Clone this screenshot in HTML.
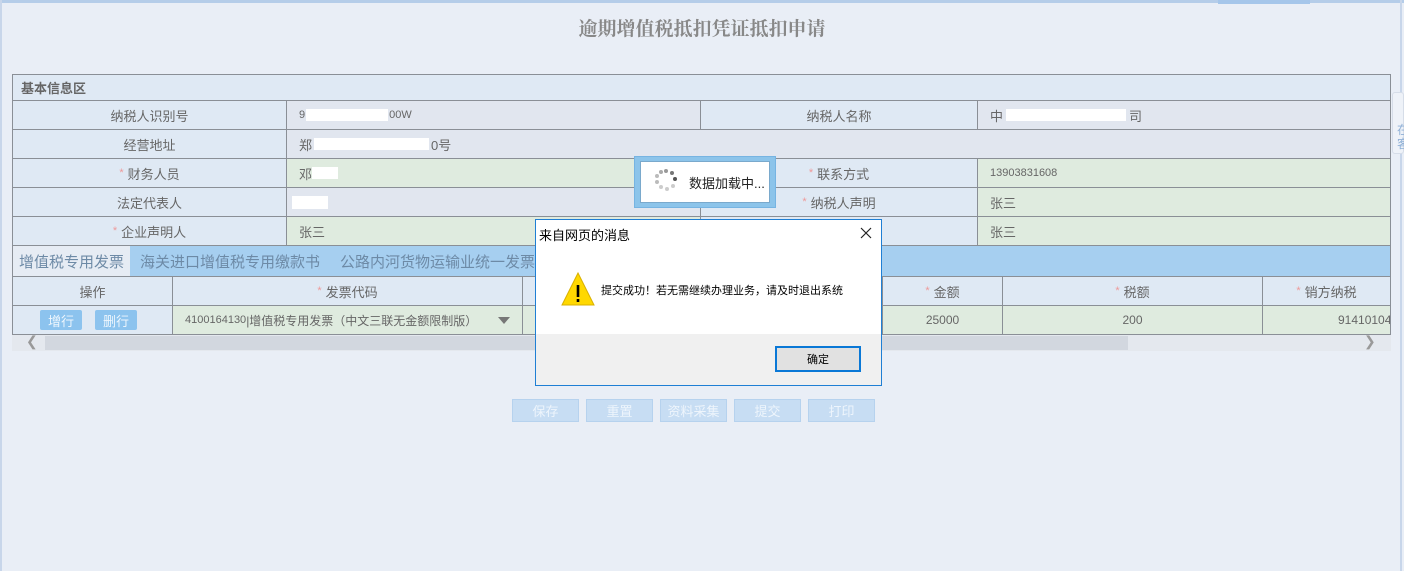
<!DOCTYPE html>
<html><head><meta charset="utf-8"><style>
*{margin:0;padding:0;box-sizing:border-box}
body{width:1404px;height:571px;background:#e9eef6;font-family:"Liberation Sans","Noto Sans CJK SC",sans-serif;position:relative;overflow:hidden;color:#666;font-size:13px}
.a{position:absolute}
.c{position:absolute;border-right:1px solid #8a8f96;border-bottom:1px solid #8a8f96;display:flex;align-items:center;font-size:13px;color:#666}
.lb{background:#dfe9f4;justify-content:center}
.gy{background:#e1e6ef;padding-left:12px}
.gr{background:#dfebdf;padding-left:12px}
.st{color:#e99;margin-right:4px;font-size:11px}
.btn{position:absolute;top:399px;height:23px;width:67px;background:#c7ddf3;border:1px solid #b6d2ee;color:#eef5fc;font-size:13px;display:flex;align-items:center;justify-content:center}
.sb{background:#8cc3ee;color:#eef6fd;width:46px;height:20px;display:flex;align-items:center;justify-content:center;border-radius:2px;position:absolute;top:4px}
</style></head><body>
<div class="a" style="left:0;top:0;width:1404px;height:3px;background:#b5cde9"></div>
<div class="a" style="left:1218px;top:0;width:92px;height:4px;background:#a5c6ea"></div>
<div class="a" style="left:0;top:0;width:2px;height:571px;background:#c8d6ea"></div>
<div class="a" style="left:1400px;top:0;width:2px;height:571px;background:#c8d6ea"></div>
<div class="a" style="left:0;top:14px;width:1404px;text-align:center;font-family:'Noto Serif CJK SC',serif;font-weight:bold;font-size:19px;color:#888">逾期增值税抵扣凭证抵扣申请</div>

<div class="a" style="left:12px;top:74px;width:1379px;height:261px;border-left:1px solid #8a8f96;border-top:1px solid #8a8f96"></div>
<div class="c" style="left:13px;top:75px;width:1378px;height:26px;background:#dfe9f4;padding-left:8px;font-weight:bold;color:#666">基本信息区</div>

<div class="c lb" style="left:13px;top:101px;width:274px;height:29px">纳税人识别号</div>
<div class="c gy" style="left:287px;top:101px;width:414px;height:29px;font-size:11px">9<span style="display:inline-block;width:82px;height:12px;background:#fff;margin:0 1px"></span>00W</div>
<div class="c lb" style="left:701px;top:101px;width:277px;height:29px">纳税人名称</div>
<div class="c gy" style="left:978px;top:101px;width:413px;height:29px">中<span style="display:inline-block;width:120px;height:12px;background:#fff;margin:0 3px"></span>司</div>

<div class="c lb" style="left:13px;top:130px;width:274px;height:29px">经营地址</div>
<div class="c gy" style="left:287px;top:130px;width:1104px;height:29px">郑<span style="display:inline-block;width:115px;height:12px;background:#fff;margin:0 2px"></span>0号</div>

<div class="c lb" style="left:13px;top:159px;width:274px;height:29px"><span class="st">*</span>财务人员</div>
<div class="c gr" style="left:287px;top:159px;width:414px;height:29px">邓<span style="display:inline-block;width:26px;height:12px;background:#fff"></span></div>
<div class="c lb" style="left:701px;top:159px;width:277px;height:29px"><span class="st">*</span>联系方式</div>
<div class="c gr" style="left:978px;top:159px;width:413px;height:29px;font-size:11px">13903831608</div>

<div class="c lb" style="left:13px;top:188px;width:274px;height:29px">法定代表人</div>
<div class="c gy" style="left:287px;top:188px;width:414px;height:29px;padding-left:5px"><span style="display:inline-block;width:36px;height:13px;background:#fff"></span></div>
<div class="c lb" style="left:701px;top:188px;width:277px;height:29px"><span class="st">*</span>纳税人声明</div>
<div class="c gr" style="left:978px;top:188px;width:413px;height:29px">张三</div>

<div class="c lb" style="left:13px;top:217px;width:274px;height:29px"><span class="st">*</span>企业声明人</div>
<div class="c gr" style="left:287px;top:217px;width:414px;height:29px">张三</div>
<div class="c lb" style="left:701px;top:217px;width:277px;height:29px"></div>
<div class="c gr" style="left:978px;top:217px;width:413px;height:29px">张三</div>

<div class="c" style="left:13px;top:246px;width:1378px;height:31px;background:#a6cff0;font-size:15px;color:#6d8aa6">
<span style="background:#e6ecf4;height:30px;width:117px;display:flex;align-items:center;justify-content:center">增值税专用发票</span>
<span style="margin-left:10px">海关进口增值税专用缴款书</span><span style="margin-left:20px">公路内河货物运输业统一发票</span></div>

<div class="c lb" style="left:13px;top:277px;width:160px;height:29px">操作</div>
<div class="c lb" style="left:173px;top:277px;width:350px;height:29px"><span class="st">*</span>发票代码</div>
<div class="c lb" style="left:523px;top:277px;width:360px;height:29px"></div>
<div class="c lb" style="left:883px;top:277px;width:120px;height:29px"><span class="st">*</span>金额</div>
<div class="c lb" style="left:1003px;top:277px;width:260px;height:29px"><span class="st">*</span>税额</div>
<div class="c lb" style="left:1263px;top:277px;width:128px;height:29px"><span class="st">*</span>销方纳税</div>

<div class="c lb" style="left:13px;top:306px;width:160px;height:29px"><span class="sb" style="left:27px;width:42px">增行</span><span class="sb" style="left:82px;width:42px">删行</span></div>
<div class="c gr" style="left:173px;top:306px;width:350px;height:29px;font-size:12px"><span style="font-size:11px">4100164130</span>|增值税专用发票（中文三联无金额限制版）<span style="position:absolute;right:12px;top:11px;border:6px solid transparent;border-top:7px solid #777;border-bottom:0"></span></div>
<div class="c gr" style="left:523px;top:306px;width:360px;height:29px"></div>
<div class="c gr" style="left:883px;top:306px;width:120px;height:29px;justify-content:center;padding:0;font-size:12px">25000</div>
<div class="c gr" style="left:1003px;top:306px;width:260px;height:29px;justify-content:center;padding:0;font-size:12px">200</div>
<div class="c gr" style="left:1263px;top:306px;width:128px;height:29px;padding-left:75px;font-size:12px;overflow:hidden;white-space:nowrap">914101047</div>

<div class="a" style="left:12px;top:335px;width:1379px;height:16px;background:#e4e8ee"></div>
<div class="a" style="left:45px;top:336px;width:1083px;height:14px;background:#d2d7df"></div>
<div class="a" style="left:26px;top:333px;color:#999;font-size:14px">&#10094;</div>
<div class="a" style="left:1364px;top:333px;color:#999;font-size:14px">&#10095;</div>

<div class="btn" style="left:512px">保存</div>
<div class="btn" style="left:586px">重置</div>
<div class="btn" style="left:660px">资料采集</div>
<div class="btn" style="left:734px">提交</div>
<div class="btn" style="left:808px">打印</div>

<div class="a" style="left:1392px;top:92px;width:12px;height:62px;background:#eef2f8;border:1px solid #d6dde8;border-radius:3px;color:#8fb0d6;font-size:12px;line-height:14px;padding-left:4px;padding-top:30px">在<br>客</div>

<div class="a" style="left:634px;top:156px;width:142px;height:52px;background:#8cc4ea;border:1px solid #76b4e2"></div>
<div class="a" style="left:640px;top:161px;width:130px;height:42px;background:#fff;border:1px solid #7aa9cc;display:flex;align-items:center;color:#222;font-size:13px">
<svg width="32" height="30" viewBox="0 0 32 30" style="margin-left:9px;margin-right:7px"><g fill="#999"><circle cx="16" cy="4" r="2"/><circle cx="22" cy="6" r="2" fill="#777"/><circle cx="25" cy="12" r="2" fill="#555"/><circle cx="23" cy="19" r="2" fill="#ccc"/><circle cx="17" cy="22" r="2" fill="#ccc"/><circle cx="11" cy="20" r="2" fill="#ccc"/><circle cx="7" cy="15" r="2" fill="#bbb"/><circle cx="7" cy="9" r="2" fill="#bbb"/><circle cx="11" cy="5" r="2" fill="#aaa"/></g></svg>数据加载中...</div>

<div class="a" style="left:535px;top:219px;width:347px;height:167px;background:#f0f0f0;border:1px solid #1f7fd4">
<div class="a" style="left:0;top:0;width:345px;height:114px;background:#fff"></div>
<div class="a" style="left:3px;top:5px;color:#000;font-size:13px">来自网页的消息</div>
<svg class="a" style="left:324px;top:7px" width="12" height="12" viewBox="0 0 12 12"><path d="M1 1L11 11M11 1L1 11" stroke="#222" stroke-width="1.2"/></svg>
<svg class="a" style="left:25px;top:52px" width="34" height="34" viewBox="0 0 34 34"><polygon points="17,1 33,33 1,33" fill="#ffd800" stroke="#d8b000"/><rect x="15.7" y="13" width="2.6" height="12" fill="#000"/><rect x="15.7" y="27" width="2.6" height="3" fill="#000"/></svg>
<div class="a" style="left:65px;top:62px;color:#000;font-size:11px;white-space:nowrap">提交成功！若无需继续办理业务，请及时退出系统</div>
<div class="a" style="left:239px;top:126px;width:86px;height:26px;border:2px solid #0a78d6;background:#e1e1e1;color:#000;font-size:11px;display:flex;align-items:center;justify-content:center">确定</div>
</div>
</body></html>
